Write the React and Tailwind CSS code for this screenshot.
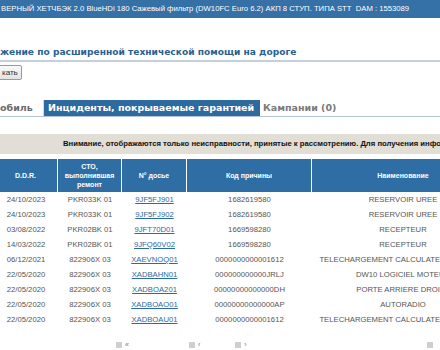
import React from "react";

const rows = [
  ["24/10/2023", "PKR033K 01", "9JF5FJ901", "1682619580", "RESERVOIR UREE"],
  ["24/10/2023", "PKR033K 01", "9JF5FJ902", "1682619580", "RESERVOIR UREE"],
  ["03/08/2022", "PKR02BK 01", "9JFT70D01", "1669598280", "RECEPTEUR"],
  ["14/03/2022", "PKR02BK 01", "9JFQ60V02", "1669598280", "RECEPTEUR"],
  ["06/12/2021", "822906X 03", "XAEVNOQ01", "0000000000001612", "TELECHARGEMENT CALCULATEUR MOTEUR"],
  ["22/05/2020", "822906X 03", "XADBAHN01", "000000000000JRLJ", "DW10 LOGICIEL MOTEUR"],
  ["22/05/2020", "822906X 03", "XADBOA201", "00000000000000DH", "PORTE ARRIERE DROITE"],
  ["22/05/2020", "822906X 03", "XADBOAO01", "00000000000000AP", "AUTORADIO"],
  ["22/05/2020", "822906X 03", "XADBOAU01", "0000000000001612", "TELECHARGEMENT CALCULATEUR MOTEUR"],
];

const cols = ["w-[64px]", "w-[64px]", "w-[65px]", "w-[125px]", "w-[182px]"];

export default function App() {
  return (
    <div className="w-[440px] h-[350px] overflow-hidden bg-white relative" style={{ fontFamily: '"Liberation Sans", Arial, sans-serif' }}>
      {/* top bar */}
      <div className="h-[18px] bg-[#3570a6] flex items-center whitespace-nowrap text-white text-[7.7px] pl-[1px]">
        ВЕРНЫЙ ХЕТЧБЭК 2.0 BlueHDi 180 Сажевый фильтр (DW10FC Euro 6.2) АКП 8 СТУП. ТИПА STT&nbsp;&nbsp;DAM : 1553089
      </div>

      {/* heading */}
      <div className="mt-[28px] h-[16px] border-b-2 border-[#c3d0dc] whitespace-nowrap text-[9.1px] font-bold text-[#2a5f8f] leading-[12px]" style={{ fontFamily: '"DejaVu Sans", Verdana, sans-serif' }}>
        жение по расширенной технической помощи на дороге
      </div>

      {/* button */}
      <div className="mt-[3px] flex">
        <div className="-ml-[2px] h-[15px] px-[3px] border border-[#9a9a9a] rounded-[2px] bg-gradient-to-b from-[#fafafa] to-[#e2e2e2] text-[8px] text-[#333] leading-[13px]">
          кать
        </div>
      </div>

      {/* tabs */}
      <div className="mt-[20px] flex items-end h-[17px] border-b border-[#b7c6d4] whitespace-nowrap text-[9.5px] font-bold" style={{ fontFamily: '"DejaVu Sans", Verdana, sans-serif' }}>
        <div className="w-[44px] h-[16px] leading-[16px] text-[#6b6b6b] border-r border-[#d5dde5]">обиль</div>
        <div className="w-[216px] h-[16px] leading-[16px] bg-[#2c6aa0] text-white pl-[4px]">Инциденты, покрываемые гарантией</div>
        <div className="h-[16px] leading-[16px] text-[#7a7a7a] pl-[3px]">Кампании (0)</div>
      </div>

      {/* notice */}
      <div className="mt-[17px] h-[20px] bg-[#e1ded5] whitespace-nowrap text-[7.7px] font-bold text-[#111] leading-[20px] pl-[63px]">
        Внимание, отображаются только неисправности, принятые к рассмотрению. Для получения информации
      </div>

      {/* table */}
      <div className="mt-[5px] -ml-[6px] w-[500px]">
        <div className="flex h-[33px] bg-[#2f6ea5] text-white text-[7px] font-bold leading-[9px]">
          <div className={`${cols[0]} flex items-center justify-center border-r border-white`}>D.D.R.</div>
          <div className={`${cols[1]} flex items-center justify-center text-center border-r border-white`}>СТО,<br />выполнившая<br />ремонт</div>
          <div className={`${cols[2]} flex items-center justify-center border-r border-white`}>N° досье</div>
          <div className={`${cols[3]} flex items-center justify-center border-r border-white`}>Код причины</div>
          <div className={`${cols[4]} flex items-center justify-center`}>Наименование</div>
        </div>
        {rows.map((r, i) => (
          <div key={i} className="flex h-[15px] items-center text-[7.7px] text-[#555] whitespace-nowrap">
            <div className={`${cols[0]} text-center`}>{r[0]}</div>
            <div className={`${cols[1]} text-center`}>{r[1]}</div>
            <div className={`${cols[2]} text-center`}>
              <span className="text-[#2b6aa3] underline">{r[2]}</span>
            </div>
            <div className={`${cols[3]} text-center`}>{r[3]}</div>
            <div className={`${cols[4]} flex justify-center`}>{r[4]}</div>
          </div>
        ))}
      </div>

      {/* pagination */}
      <div className="mt-[14px] flex items-center h-[8px] text-[7px] text-[#777]">
        <div className="ml-[116px] flex items-center gap-[3px]"><span className="w-[6px] h-[6px] bg-[#cfcfcf] inline-block"></span><span>«</span></div>
        <div className="ml-[60px] flex items-center gap-[3px]"><span className="w-[6px] h-[6px] bg-[#cfcfcf] inline-block"></span><span>‹</span></div>
        <div className="ml-[35px] flex items-center gap-[3px]"><span className="w-[6px] h-[6px] bg-[#cfcfcf] inline-block"></span><span>›</span></div>
        <div className="ml-[180px] flex items-center gap-[3px]"><span className="w-[6px] h-[6px] bg-[#cfcfcf] inline-block"></span></div>
      </div>
    </div>
  );
}
